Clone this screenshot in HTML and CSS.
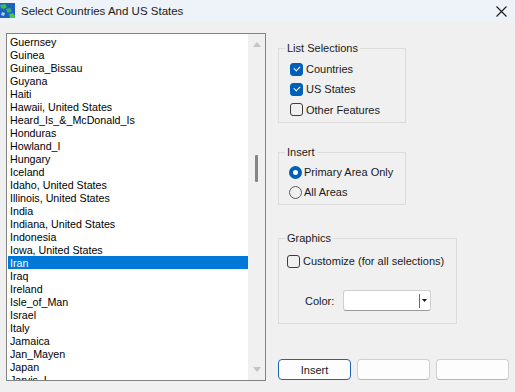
FILE: index.html
```html
<!DOCTYPE html>
<html lang="en">
<head>
    <meta charset="UTF-8">
    <title>Select Countries And US States</title>
    <link rel="stylesheet" href="styles.css">
</head>
<body>
    <div class="dialog">
        <div class="dialog-titlebar">
            <svg class="dialog-icon" width="15" height="15" viewBox="0 0 15 15">
                <rect x="0" y="0" width="15" height="15" fill="#1f5fc4"/>
                <path d="M0 2 L5 1 L7 4 L4 6 L1 5 Z" fill="#38c04a"/>
                <path d="M6 6 L10 5 L12 8 L9 10 L7 9 Z" fill="#2fb85a"/>
                <path d="M9 11 L13 10 L15 13 L15 15 L10 15 Z" fill="#43c94e"/>
                <path d="M2 9 L5 10 L4 13 L1 12 Z" fill="#9fd6f2"/>
            </svg>
            <span class="dialog-title">Select Countries And US States</span>
            <span class="dialog-close">
                <svg width="11" height="11" viewBox="0 0 11 11">
                    <path d="M0.5 0.5 L10.5 10.5 M10.5 0.5 L0.5 10.5" stroke="#1a1a1a" stroke-width="1.1"/>
                </svg>
            </span>
        </div>
        <div class="dialog-body">
            <div class="listbox">
                <ul class="listbox-items">
                    <li>Guernsey</li>
                    <li>Guinea</li>
                    <li>Guinea_Bissau</li>
                    <li>Guyana</li>
                    <li>Haiti</li>
                    <li>Hawaii, United States</li>
                    <li>Heard_Is_&amp;_McDonald_Is</li>
                    <li>Honduras</li>
                    <li>Howland_I</li>
                    <li>Hungary</li>
                    <li>Iceland</li>
                    <li>Idaho, United States</li>
                    <li>Illinois, United States</li>
                    <li>India</li>
                    <li>Indiana, United States</li>
                    <li>Indonesia</li>
                    <li>Iowa, United States</li>
                    <li class="selected">Iran</li>
                    <li>Iraq</li>
                    <li>Ireland</li>
                    <li>Isle_of_Man</li>
                    <li>Israel</li>
                    <li>Italy</li>
                    <li>Jamaica</li>
                    <li>Jan_Mayen</li>
                    <li>Japan</li>
                    <li>Jarvis_I</li>
                </ul>
                <div class="listbox-scroll">
                    <svg width="8" height="5" viewBox="0 0 8 5"><path d="M0 5 L4 0 L8 5 Z" fill="#c4c4c4"/></svg>
                    <div class="listbox-track">
                        <div class="listbox-thumb"></div>
                    </div>
                    <svg width="8" height="5" viewBox="0 0 8 5"><path d="M0 0 L4 5 L8 0 Z" fill="#c4c4c4"/></svg>
                </div>
            </div>

            <div class="options">
                <fieldset class="group group-list">
                    <legend>List Selections</legend>
                    <label class="option"><span class="check checked"></span>Countries</label>
                    <label class="option"><span class="check checked"></span>US States</label>
                    <label class="option"><span class="check"></span>Other Features</label>
                </fieldset>

                <fieldset class="group group-insert">
                    <legend>Insert</legend>
                    <label class="option"><span class="radio checked"></span>Primary Area Only</label>
                    <label class="option"><span class="radio"></span>All Areas</label>
                </fieldset>

                <fieldset class="group group-graphics">
                    <legend>Graphics</legend>
                    <label class="option"><span class="check"></span>Customize (for all selections)</label>
                    <div class="color-row">
                        <span class="color-label">Color:</span>
                        <div class="combo">
                            <span class="combo-value"></span>
                            <span class="combo-arrow">
                                <svg width="5" height="3" viewBox="0 0 5 3"><path d="M0 0 L5 0 L2.5 3 Z" fill="#1a1a1a"/></svg>
                            </span>
                        </div>
                    </div>
                </fieldset>

                <div class="buttons">
                    <button class="btn btn-default">Insert</button>
                    <button class="btn"></button>
                    <button class="btn"></button>
                </div>
            </div>
        </div>
    </div>
</body>
</html>
```

FILE: styles.css
```css
* {
    padding: 0;
    margin: 0;
    box-sizing: border-box;
}
body {
    width: 515px;
    height: 392px;
    overflow: hidden;
    background: #f0f0f0;
    font-family: "Liberation Sans", Arial, sans-serif;
    color: #000;
}
ul {
    list-style: none;
}
.dialog-titlebar {
    height: 22px;
    display: flex;
    align-items: center;
    background: #eef3f9;
}
.dialog-icon {
    margin-top: -2px;
}
.dialog-title {
    margin-left: 6px;
    font-size: 11.5px;
    color: #1a1a1a;
}
.dialog-close {
    margin-left: auto;
    margin-right: 8px;
    display: flex;
}
.dialog-body {
    display: flex;
    padding: 11px 0 0 6px;
}
.listbox {
    width: 260px;
    height: 348px;
    border: 1px solid #828282;
    background: #fff;
    display: flex;
    overflow: hidden;
}
.listbox-items {
    width: 241px;
    padding-top: 1px;
    padding-left: 1px;
    font-size: 10.7px;
}
.listbox-items li {
    height: 13px;
    line-height: 14px;
    padding-left: 2px;
    white-space: nowrap;
}
.listbox-items li.selected {
    background: #0078d7;
    color: #fff;
}
.listbox-scroll {
    width: 17px;
    background: #f0f0f0;
    display: flex;
    flex-direction: column;
    align-items: center;
    padding: 8px 0 8px;
}
.listbox-track {
    flex: 1;
    padding-top: 108px;
}
.listbox-thumb {
    width: 3px;
    height: 27px;
    background: #858585;
    border-radius: 1px;
}
.options {
    margin-left: 12px;
    display: flex;
    flex-direction: column;
    font-size: 11px;
}
.group {
    border: 1px solid #dcdcdc;
    padding: 3px 0 2px 0;
}
.group legend {
    margin-left: 6px;
    padding: 0 2px;
    height: 16px;
    line-height: 16px;
    color: #1a1a1a;
}
.group-list {
    width: 128px;
    margin-top: 7px;
}
.group-list .option {
    margin-left: 11px;
}
.group-insert {
    width: 128px;
    margin-top: 21px;
    padding-top: 2px;
}
.group-insert .option {
    margin-left: 10px;
}
.group-graphics {
    width: 179px;
    margin-top: 25px;
    padding: 5px 0 12px 0;
}
.group-graphics .option {
    margin-left: 8px;
}
.option {
    display: flex;
    align-items: center;
    height: 20px;
    color: #1a1a1a;
}
.group-list .option:nth-of-type(3) {
    height: 21px;
}
.check {
    width: 13px;
    height: 13px;
    border: 1px solid #3c3c3c;
    border-radius: 3px;
    margin-right: 3px;
    position: relative;
}
.check.checked {
    background: #005fb8;
    border-color: #005fb8;
}
.check.checked::after {
    content: "";
    position: absolute;
    left: 3px;
    top: 2px;
    width: 5px;
    height: 3px;
    border-left: 1px solid #fff;
    border-bottom: 1px solid #fff;
    transform: rotate(-45deg);
}
.radio {
    width: 13px;
    height: 13px;
    border: 1px solid #5a5a5a;
    border-radius: 50%;
    margin-right: 2px;
}
.radio.checked {
    border: 4px solid #005fb8;
    background: #fff;
}
.color-row {
    display: flex;
    align-items: center;
    margin-top: 19px;
    padding-left: 26px;
}
.color-label {
    width: 38px;
    color: #1a1a1a;
}
.combo {
    width: 88px;
    height: 21px;
    background: #fff;
    border: 1px solid #cfcfcf;
    border-bottom-color: #9a9a9a;
    border-radius: 3px;
    display: flex;
    align-items: center;
}
.combo-value {
    flex: 1;
}
.combo-arrow {
    width: 10px;
    height: 14px;
    border-left: 1px solid #6a6a6a;
    display: flex;
    align-items: center;
    justify-content: center;
    margin-right: 1px;
}
.buttons {
    display: flex;
    gap: 6px;
    margin-top: 35px;
}
.btn {
    width: 73px;
    height: 21px;
    background: #fdfdfd;
    border: 1px solid #d0d0d0;
    border-bottom-color: #b8b8b8;
    border-radius: 4px;
    font-family: "Liberation Sans", Arial, sans-serif;
    font-size: 11px;
    color: #1a1a1a;
}
.btn-default {
    border: 1px solid #1f63b5;
}
```
